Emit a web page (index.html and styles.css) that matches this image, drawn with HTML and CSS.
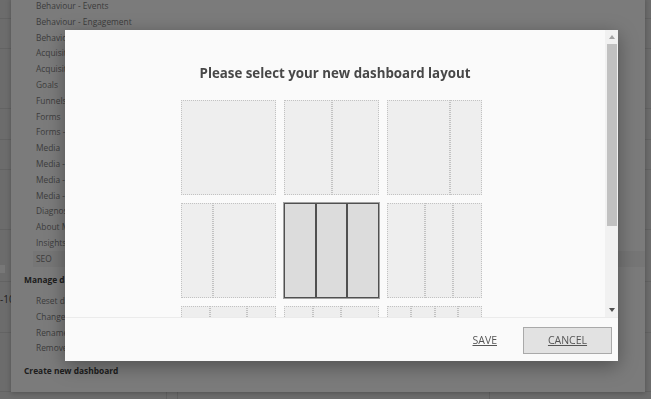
FILE: index.html
```html
<!DOCTYPE html>
<html lang="en">
<head>
<meta charset="utf-8">
<title>Dashboard layout</title>
<link rel="stylesheet" href="styles.css">
</head>
<body>
<div class="page">
  <div class="prow r1"></div>
  <div class="prow r2"></div>
  <div class="prow r3"></div>
  <div class="prow r4"></div>
  <div class="prow r5"></div>
  <div class="prow r6"></div>
  <div class="prow r7"><span class="chip"></span></div>
  <div class="prow r8"><span class="num">-10</span></div>
  <div class="prow r9"></div>
  <div class="pfoot"><div class="pc pc1"></div><div class="pc pc2"></div><div class="pc pc3"></div><div class="pc pc4"></div></div>
</div>

<div class="menu">
  <ul class="menu-list">
    <li>Behaviour - Events</li>
    <li>Behaviour - Engagement</li>
    <li>Behaviour - Performance</li>
    <li>Acquisition - Overview</li>
    <li>Acquisition - Campaigns</li>
    <li>Goals</li>
    <li>Funnels</li>
    <li>Forms</li>
    <li>Forms - Overview</li>
    <li>Media</li>
    <li>Media - Audience</li>
    <li>Media - Engagement</li>
    <li>Media - Overview</li>
    <li>Diagnostics</li>
    <li>About Matomo</li>
    <li>Insights</li>
    <li class="active">SEO</li>
  </ul>
  <div class="menu-head">Manage dashboard</div>
  <ul class="menu-list manage">
    <li>Reset dashboard</li>
    <li>Change dashboard layout</li>
    <li>Rename dashboard</li>
    <li>Remove dashboard</li>
  </ul>
  <div class="menu-head create">Create new dashboard</div>
</div>

<div class="overlay"></div>

<div class="modal">
  <div class="modal-body">
    <div class="content">
      <h2 class="title">Please select your new dashboard layout</h2>
      <div class="grid">
        <div class="tile"><div class="col f1"></div></div>
        <div class="tile"><div class="col f1"></div><div class="col f1"></div></div>
        <div class="tile"><div class="col f2"></div><div class="col f1"></div></div>

        <div class="tile"><div class="col f1"></div><div class="col f2"></div></div>
        <div class="tile selected"><div class="col f1"></div><div class="col f1"></div><div class="col f1"></div></div>
        <div class="tile"><div class="col f4"></div><div class="col f3"></div><div class="col f3"></div></div>

        <div class="tile"><div class="col f3"></div><div class="col f4"></div><div class="col f3"></div></div>
        <div class="tile"><div class="col f3"></div><div class="col f3"></div><div class="col f4"></div></div>
        <div class="tile"><div class="col f1"></div><div class="col f1"></div><div class="col f1"></div><div class="col f1"></div></div>
      </div>
    </div>
    <div class="sbar">
      <div class="sb-btn"><span class="tri-up"></span></div>
      <div class="sb-track"><div class="sb-thumb"></div></div>
      <div class="sb-btn"><span class="tri-down"></span></div>
    </div>
  </div>
  <div class="footer">
    <a class="save" href="#">SAVE</a>
    <button class="cancel" type="button">CANCEL</button>
  </div>
</div>
</body>
</html>
```

FILE: styles.css
```css
* { box-sizing: border-box; }

html, body {
  margin: 0;
  padding: 0;
  width: 651px;
  height: 399px;
  overflow: hidden;
  font-family: "Open Sans", "Noto Sans", sans-serif;
}

body {
  background: #d8d8d8;
  position: relative;
}

/* ---------- background page ---------- */
.page {
  display: flex;
  flex-direction: column;
  height: 399px;
}
.prow {
  border-bottom: 1px solid #c6c6c6;
  flex: none;
}
.r1 { height: 19px; }
.r2 { height: 30px; }
.r3 { height: 60px; }
.r4 { height: 31px; }
.r5 { height: 30px; }
.r6 { height: 60px; }
.r7 { height: 52px; padding-top: 35px; }
.r8 { height: 51px; padding-top: 4px; }
.r9 { height: 59px; }
.chip {
  display: block;
  width: 5px;
  height: 8px;
  background: #efefef;
}
.num {
  font-size: 10px;
  color: #444;
}
.pfoot {
  flex: 1;
  display: flex;
}
.pc { border-right: 1px solid #c2c2c2; }
.pc1 { width: 167px; }
.pc2 { width: 11px; }
.pc3 { width: 312px; }
.pc4 { flex: 1; border-right: 0; }

/* ---------- dropdown menu (overlays the page) ---------- */
.menu {
  position: absolute;
  left: 11px;
  top: -2px;
  width: 634px;
  padding-bottom: 11px;
  background: #f7f7f7;
  box-shadow: 0 1px 5px rgba(0, 0, 0, 0.25);
}
.menu-list {
  list-style: none;
  margin: 0;
  padding: 0;
}
.menu-list li {
  margin-left: 22px;
  padding-left: 3px;
  height: 15.8px;
  line-height: 15.8px;
  font-size: 8.4px;
  color: #7a7a7a;
  white-space: nowrap;
}
.menu-list li.active { background: #ececec; }
.menu-list.manage { margin-top: 3px; }
.menu-head {
  margin-top: 3.5px;
  padding-left: 13px;
  height: 20px;
  line-height: 20px;
  font-size: 8.4px;
  font-weight: 700;
  color: #3c3c3c;
  white-space: nowrap;
}
.menu-head.create { margin-top: 4.4px; }

/* ---------- modal overlay ---------- */
.overlay {
  position: fixed;
  inset: 0;
  background: rgba(0, 0, 0, 0.5);
}

.modal {
  position: absolute;
  left: 65px;
  top: 30px;
  width: 553px;
  height: 331px;
  background: #fafafa;
  box-shadow: 0 5px 18px rgba(0, 0, 0, 0.35);
  display: flex;
  flex-direction: column;
}
.modal-body {
  height: 287px;
  display: flex;
}
.content {
  flex: 1;
  overflow: hidden;
  padding-top: 33px;
}
.title {
  margin: 0;
  text-align: center;
  font-size: 13.3px;
  line-height: 20px;
  font-weight: 700;
  color: #474747;
}
.grid {
  margin-top: 17px;
  padding-right: 7px;
  display: grid;
  grid-template-columns: repeat(3, 95px);
  grid-auto-rows: 95px;
  gap: 8px;
  justify-content: center;
}
.tile {
  display: flex;
  cursor: pointer;
}
.col {
  flex-basis: 0;
  min-width: 0;
  border: 1px dotted #c2c2c2;
  background: #eeeeee;
}
.f1 { flex-grow: 1; }
.f2 { flex-grow: 2; }
.f3 { flex-grow: 3; }
.f4 { flex-grow: 4; }
.tile.selected { box-shadow: 0 0 0 1px #a2a2a2; }
.tile.selected .col {
  border: 1px solid #505050;
  background: #dcdcdc;
}

/* scrollbar */
.sbar {
  width: 13px;
  flex: none;
  background: #f1f1f1;
  display: flex;
  flex-direction: column;
}
.sb-btn {
  height: 14px;
  flex: none;
  display: flex;
  align-items: center;
  justify-content: center;
  padding-left: 1px;
}
.sb-track {
  flex: 1;
}
.sb-thumb {
  height: 182px;
  margin-left: 2px;
  margin-right: 1px;
  background: #c1c1c1;
}
.tri-up {
  width: 0;
  height: 0;
  border-left: 3.5px solid transparent;
  border-right: 3.5px solid transparent;
  border-bottom: 4px solid #a3a3a3;
}
.tri-down {
  width: 0;
  height: 0;
  border-left: 3.5px solid transparent;
  border-right: 3.5px solid transparent;
  border-top: 4px solid #505050;
}

/* footer */
.footer {
  flex: 1;
  border-top: 1px solid #ebebeb;
  display: flex;
  justify-content: flex-end;
  align-items: center;
  gap: 26px;
  padding-right: 6px;
}
.save {
  font-size: 10.5px;
  color: #555;
  text-decoration: underline;
}
.cancel {
  width: 89px;
  height: 27px;
  margin-top: 1px;
  background: #e2e2e2;
  border: 1px solid #a9a9a9;
  font-family: "Open Sans", "Noto Sans", sans-serif;
  font-size: 10.5px;
  color: #555;
  text-decoration: underline;
  padding: 0;
}
```
